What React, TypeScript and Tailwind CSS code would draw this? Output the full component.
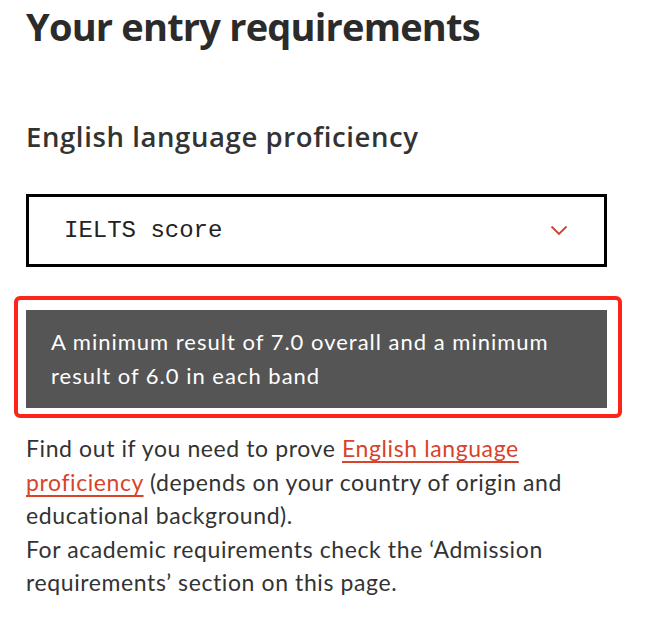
export default function App() {
  return (
    <div className="bg-white min-h-[624px] pl-[26px] pt-[2px] text-[#2b2b2b] font-['Lato','Liberation_Sans',sans-serif]">
      <div className="w-[581px]">
        {/* TITLE */}
        <h1 className="font-['Open_Sans',sans-serif] text-[38px] font-bold leading-[48px] tracking-[-0.8px]">Your entry requirements</h1>

        {/* SUBTITLE */}
        <h2 className="mt-[70px] font-['Open_Sans',sans-serif] text-[27.5px] font-semibold leading-[34px] tracking-[0.6px] text-[#333]">English language proficiency</h2>

        {/* SELECT */}
        <div className="mt-[40px] h-[73px] border-[3px] border-black flex items-center justify-between pl-[35px] pr-[36px]">
          <span className="font-['Liberation_Mono',monospace] text-[24px] text-[#222]">IELTS score</span>
          <svg width="18" height="11" viewBox="0 0 18 11" fill="none">
            <path d="M1.5 1.5 L9 9 L16.5 1.5" stroke="#c9452e" strokeWidth="1.8" />
          </svg>
        </div>

        {/* HIGHLIGHTED RESULT */}
        <div className="mt-[29px] -ml-[12px] -mr-[15px] border-[4px] border-[#ff2419] rounded-[6px] pt-[10px] pb-[6px] pl-[8px] pr-[11px]">
          <div className="bg-[#555555] pl-[25px] pr-[40px] py-[15px] text-white text-[22px] leading-[34px] tracking-[1px]">
            A minimum result of 7.0 overall and a minimum result of 6.0 in each band
          </div>
        </div>

        {/* INFO */}
        <p className="mt-[14px] text-[23px] leading-[33.5px] tracking-[0.6px] text-[#333]">
          Find out if you need to prove{" "}
          <a href="#" className="text-[#d8432b] underline underline-offset-[4px]">English language proficiency</a>{" "}
          (depends on your country of origin and educational background).
          <br />
          For academic requirements check the ‘Admission requirements’ section on this page.
        </p>
      </div>
    </div>
  );
}
